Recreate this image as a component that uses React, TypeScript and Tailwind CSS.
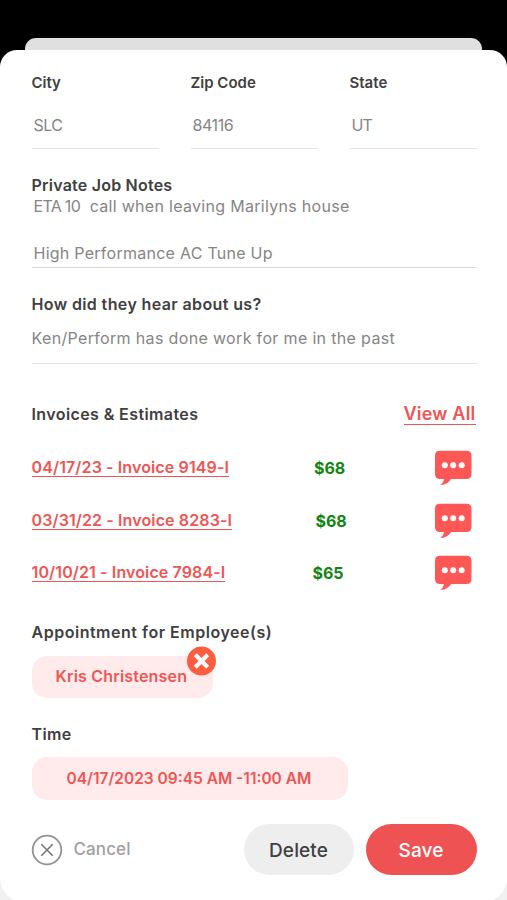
import React from 'react';

// --- Data ---
const ADDRESS = [
  { label: 'City', value: 'SLC', valueStyle: 'tracking-[-0.6px]' },
  { label: 'Zip Code', value: '84116', valueStyle: 'tracking-[-0.4px]' },
  { label: 'State', value: 'UT', valueStyle: 'tracking-[-0.8px]' },
];

const INVOICES = [
  { title: '04/17/23 - Invoice 9149-I', amount: '$68', amountStyle: 'ml-[282.5px]' },
  { title: '03/31/22 - Invoice 8283-I', amount: '$68', amountStyle: 'ml-[284px]' },
  { title: '10/10/21 - Invoice 7984-I', amount: '$65', amountStyle: 'ml-[281px]' },
];

// --- Icons ---
const ChatIcon = () => (
  <svg width="38" height="36" viewBox="0 0 38 36" className="block">
    <path
      d="M6 0.7H32.5Q37.5 0.7 37.5 5.7V24Q37.5 29 32.5 29H17C15 32.5 11 35.2 6 34.8C8.6 33.4 9.8 31.5 9.9 29H6Q1 29 1 24V5.7Q1 0.7 6 0.7Z"
      fill="#ff5656"
    />
    <circle cx="10.8" cy="15.2" r="3" fill="#fff" />
    <circle cx="19.2" cy="15.2" r="3" fill="#fff" />
    <circle cx="27.7" cy="15.2" r="3" fill="#fff" />
  </svg>
);

const RemoveIcon = () => (
  <svg width="30" height="30" viewBox="0 0 30 30" className="block">
    <circle cx="14.5" cy="15" r="14.5" fill="#ff5c40" />
    <path d="M8.3 8.8L20.7 21.2M20.7 8.8L8.3 21.2" stroke="#fff" strokeWidth="4.2" />
  </svg>
);

const CancelIcon = () => (
  <svg width="32" height="32" viewBox="0 0 32 32" fill="none" className="block">
    <circle cx="16" cy="16" r="14.3" stroke="#939393" strokeWidth="1.8" />
    <path d="M10.3 10.3L21.7 21.7M21.7 10.3L10.3 21.7" stroke="#777" strokeWidth="1.6" />
  </svg>
);

const Heading = ({ children, className }: { children: React.ReactNode; className: string }) => (
  <h3 className={`leading-5 font-semibold whitespace-nowrap text-[#404040] ${className}`}>{children}</h3>
);

// --- Page ---
export default function App() {
  return (
    <div className="h-[900px] w-[507px] overflow-hidden bg-[linear-gradient(#000_450px,#f1f1f1_450px)] pt-[38px] font-['Inter','Liberation_Sans',sans-serif]">
      <div className="mr-[25px] ml-[25px] h-3 rounded-t-[11px] bg-[#e0e0e0]" />

      <div className="flex h-[852px] flex-col rounded-t-[17px] rounded-b-[24px] bg-white pr-[30.5px] pl-[31.5px]">
        {/* Address */}
        <div className="mt-[23px] grid grid-cols-3 gap-8">
          {ADDRESS.map((field) => (
            <div key={field.label} className="h-[76px] border-b border-[#e4e4e4]">
              <Heading className="text-[15px]">{field.label}</Heading>
              <p className={`mt-[22px] pl-0.5 text-base leading-5 whitespace-nowrap text-[#858585] ${field.valueStyle}`}>
                {field.value}
              </p>
            </div>
          ))}
        </div>

        {/* Notes */}
        <div className="mt-[26px] h-[93px] border-b border-[#dcdcdc]">
          <Heading className="text-base tracking-[0.22px]">Private Job Notes</Heading>
          <p className="mt-px pl-0.5 text-base leading-5 tracking-[0.3px] whitespace-pre text-[#858585]">
            <span className="tracking-[-0.7px]">ETA 10</span>
            {'  call when leaving Marilyns house'}
          </p>
          <p className="mt-[27px] pl-0.5 text-base leading-5 tracking-[0.26px] whitespace-pre text-[#858585]">
            High Performance AC Tune Up
          </p>
        </div>

        {/* Referral */}
        <div className="mt-[26px] h-[70px] border-b border-[#e4e4e4]">
          <Heading className="text-base tracking-[0.38px]">How did they hear about us?</Heading>
          <p className="mt-3.5 text-base leading-5 tracking-[0.34px] whitespace-nowrap text-[#858585]">
            Ken/Perform has done work for me in the past
          </p>
        </div>

        {/* Invoices */}
        <div className="mt-[37px] flex h-[26px] items-center justify-between">
          <Heading className="text-base tracking-[0.4px]">Invoices &amp; Estimates</Heading>
          <a className="mr-px border-b border-[#ee5555] text-lg leading-[21px] font-semibold tracking-[0.2px] whitespace-nowrap text-[#ee5555]">
            View All
          </a>
        </div>
        <div className="mt-[15px]">
          {INVOICES.map((invoice) => (
            <div key={invoice.title} className="flex h-[52.5px] items-center">
              <div className="grid flex-1 items-center">
                <a className="col-start-1 row-start-1 justify-self-start border-b border-[#ee5555] text-base leading-[17px] font-semibold tracking-[0.12px] whitespace-nowrap text-[#ee5555]">
                  {invoice.title}
                </a>
                <span className={`col-start-1 row-start-1 text-base leading-5 font-bold text-[#118511] ${invoice.amountStyle}`}>
                  {invoice.amount}
                </span>
              </div>
              <div className="mr-[5px]">
                <ChatIcon />
              </div>
            </div>
          ))}
        </div>

        {/* Employees */}
        <Heading className="mt-[22px] text-base tracking-[0.52px]">Appointment for Employee(s)</Heading>
        <div className="relative mt-3.5 flex h-[42px] w-[181px] items-center rounded-[15px] bg-[#ffebeb] pb-px pl-6">
          <span className="text-base font-semibold tracking-[0.19px] whitespace-nowrap text-[#ee5555]">Kris Christensen</span>
          <div className="absolute -top-[10px] right-[-4px]">
            <RemoveIcon />
          </div>
        </div>

        {/* Time */}
        <Heading className="mt-[26px] text-base tracking-[0.4px]">Time</Heading>
        <div className="mt-[13px] flex h-[43px] w-[316px] items-center rounded-[15px] bg-[#ffebeb] pt-px pl-[35px]">
          <span className="text-[15.5px] font-semibold whitespace-nowrap text-[#ee5555]">04/17/2023 09:45 AM -11:00 AM</span>
        </div>

        {/* Actions */}
        <div className="mt-6 flex h-[52px] items-center">
          <button className="-ml-px flex items-center gap-[11px]">
            <CancelIcon />
            <span className="pt-px text-[17px] font-medium tracking-[0.1px] text-[#a0a0a0]">Cancel</span>
          </button>
          <div className="ml-auto flex gap-3">
            <button className="h-[51px] w-[110px] rounded-full bg-[#eeeeee] pt-[3px] text-[19px] font-medium tracking-[0.1px] text-[#404040]">
              Delete
            </button>
            <button className="h-[51px] w-[111px] rounded-full bg-[#ee5253] pt-[3px] text-[19px] font-medium tracking-[0.1px] text-white">
              Save
            </button>
          </div>
        </div>
      </div>
    </div>
  );
}
